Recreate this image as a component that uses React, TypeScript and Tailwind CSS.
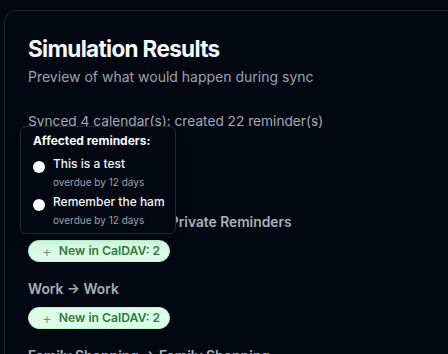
const mappings = [
  { from: "Private Reminders", to: "Private Reminders", created: 2 },
  { from: "Work", to: "Work", created: 2 },
  { from: "Family Shopping", to: "Family Shopping", created: 2 },
];

const affected = [
  { title: "This is a test", note: "overdue by 12 days" },
  { title: "Remember the ham", note: "overdue by 12 days" },
];

function NewBadge({ count }: { count: number }) {
  return (
    <span className="inline-flex h-[22px] items-center gap-[7px] self-start rounded-full border border-green-200 bg-[#dcfce7] pl-[13px] pr-[9px] text-[12.2px] font-semibold text-[#2f7d43]">
      <span className="text-[15px] font-light leading-none text-[#5f9a6e]">+</span>
      New in CalDAV: {count}
    </span>
  );
}

export default function App() {
  return (
    <div className="min-h-screen overflow-hidden bg-[#030712] font-['Inter',sans-serif]">
      <div className="ml-1 mt-2.5 w-[470px] rounded-xl border border-[#1f2533] pl-[23px] pt-[22px] pb-6">
        <h1 className="text-[22.5px] font-bold leading-8 tracking-[-0.03em] text-[#f9fafb]">Simulation Results</h1>
        <p className="mt-0.5 text-[14px] leading-5 text-[#9ca3af]">Preview of what would happen during sync</p>

        <div className="relative mt-6">
          <p className="text-[13.7px] leading-5 text-[#a3aab6]">Synced 4 calendar(s): created 22 reminder(s)</p>

          <div className="mt-[81px] flex flex-col gap-[17px]">
            {mappings.map((m) => (
              <div key={m.from} className="flex flex-col gap-2">
                <h3 className="text-[13.8px] font-semibold leading-5 text-[#a8afbb]">
                  {m.from} → {m.to}
                </h3>
                <NewBadge count={m.created} />
              </div>
            ))}
          </div>

          {/* hover popover */}
          <div className="absolute left-[-8px] top-[15px] w-[156px] rounded-md border border-[#232a37] bg-[#030712] px-3 pt-[6px] pb-[5px] shadow-lg">
            <div className="text-[12px] font-bold leading-4 text-[#f9fafb]">Affected reminders:</div>
            <ul className="mt-[6px] flex flex-col gap-[3px]">
              {affected.map((a) => (
                <li key={a.title} className="flex gap-[8px]">
                  <span className="mt-[6px] h-3 w-3 shrink-0 rounded-full bg-white" />
                  <div className="whitespace-nowrap">
                    <div className="text-[12px] font-medium leading-[18px] text-[#f3f4f6]">{a.title}</div>
                    <div className="mt-[1px] text-[10px] leading-4 text-[#9ca3af]">{a.note}</div>
                  </div>
                </li>
              ))}
            </ul>
          </div>
        </div>
      </div>
    </div>
  );
}
